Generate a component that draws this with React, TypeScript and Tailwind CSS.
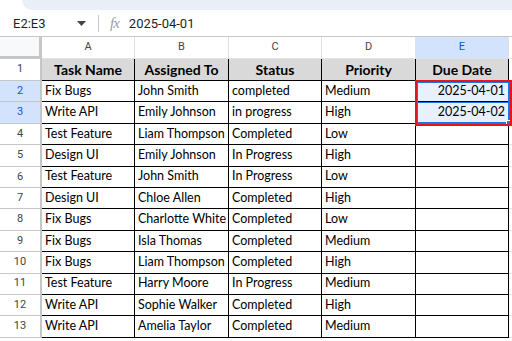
import React from "react";

type Row = [string, string, string, string, string];

const rows: Row[] = [
  ["Fix Bugs", "John Smith", "completed", "Medium", "2025-04-01"],
  ["Write API", "Emily Johnson", "in progress", "High", "2025-04-02"],
  ["Test Feature", "Liam Thompson", "Completed", "Low", ""],
  ["Design UI", "Emily Johnson", "In Progress", "High", ""],
  ["Test Feature", "John Smith", "In Progress", "Low", ""],
  ["Design UI", "Chloe Allen", "Completed", "High", ""],
  ["Fix Bugs", "Charlotte White", "Completed", "Low", ""],
  ["Fix Bugs", "Isla Thomas", "Completed", "Medium", ""],
  ["Fix Bugs", "Liam Thompson", "Completed", "High", ""],
  ["Test Feature", "Harry Moore", "In Progress", "Medium", ""],
  ["Write API", "Sophie Walker", "Completed", "High", ""],
  ["Write API", "Amelia Taylor", "Completed", "Medium", ""],
];

const headers = ["Task Name", "Assigned To", "Status", "Priority", "Due Date"];
const letters = ["A", "B", "C", "D", "E"];

const cellFont = { fontFamily: "Lato, 'Liberation Sans', sans-serif" };
const uiFont = { fontFamily: "Roboto, 'Liberation Sans', sans-serif" };

export default function App() {
  return (
    <div className="w-[512px] h-[341px] overflow-hidden bg-white relative" style={uiFont}>
      {/* toolbar bottom edge */}
      <div className="ml-[22px] h-[10px] bg-[#eaeef6] rounded-bl-[12px]" />

      {/* formula bar */}
      <div className="h-[27px] flex items-center border-b border-[#c7c7c7] text-[13px] text-[#1f1f1f]">
        <div className="w-[98px] flex items-center pl-[13px] pr-[10px] justify-between pt-[1px]">
          <span>E2:E3</span>
          <svg width="9" height="5" viewBox="0 0 9 5" className="mr-[2px]">
            <path d="M0 0h9L4.5 5z" fill="#444" />
          </svg>
        </div>
        <div className="w-px h-[17px] bg-[#c7c7c7]" />
        <span
          className="ml-[11px] italic text-[#9aa0a6] text-[15px] tracking-[-1px]"
          style={{ fontFamily: "'Liberation Serif', serif" }}
        >
          fx
        </span>
        <span className="ml-[10px] pt-[1px]">2025-04-01</span>
      </div>

      {/* grid */}
      <div className="grid grid-cols-[42px_93px_94px_93px_94px_93px_3px]">
        {/* column headers */}
        <div className="h-[22px] bg-[#f8f9fa] border-r-[3px] border-b-[3px] border-[#c4c7c5]" />
        {letters.map((l) => (
          <div
            key={l}
            className={`h-[22px] flex items-center justify-center text-[11px] border-r border-b border-[#e1e1e1] ${
              l === "E" ? "bg-[#d3e3fd] text-[#0b57d0]" : "bg-white text-[#444]"
            }`}
          >
            {l}
          </div>
        ))}
        <div className="h-[22px] border-b border-[#e1e1e1]" />

        {/* header row 1 */}
        <div className="h-[22px] flex items-center justify-center text-[11px] text-[#444] bg-white border-r-[2px] border-b border-[#c4c7c5]">
          1
        </div>
        {headers.map((h) => (
          <div
            key={h}
            className="h-[22px] flex items-center justify-center font-bold text-[14px] text-black bg-[#d9d9d9] border-r border-b border-black"
            style={cellFont}
          >
            {h}
          </div>
        ))}
        <div className="h-[22px] border-b border-[#e1e1e1]" />

        {rows.map((r, i) => {
          const sel = i < 2;
          return (
            <React.Fragment key={i}>
              <div
                className={`h-[21.4px] flex items-center justify-center text-[11px] border-r-[2px] border-b border-[#c4c7c5] ${
                  sel ? "bg-[#d3e3fd] text-[#0b57d0]" : "bg-white text-[#444]"
                }`}
              >
                {i + 2}
              </div>
              {r.map((c, j) => (
                <div
                  key={j}
                  className={`h-[21.4px] flex items-center px-[3px] text-[12.5px] text-black border-r border-b border-black whitespace-nowrap overflow-hidden ${
                    j === 4 ? "justify-end" : ""
                  } ${j === 4 && sel ? "bg-[#e8f0fe]" : ""}`}
                  style={cellFont}
                >
                  {c}
                </div>
              ))}
              <div className="h-[21.4px] border-b border-[#e1e1e1]" />
            </React.Fragment>
          );
        })}
      </div>

      {/* selection and annotation */}
      <div className="absolute left-[416px] top-[81px] w-[94px] h-[43px] border-[2px] border-[#1a73e8] pointer-events-none">
        <div className="mt-[19px] h-px bg-[#1a73e8]" />
        <div className="absolute -right-[4px] -bottom-[4px] w-[6px] h-[6px] bg-[#1a73e8] border border-white" />
      </div>
      <div className="absolute left-[415px] top-[80px] w-[97px] h-[46px] border-[2px] border-[#e3161b] pointer-events-none" />
    </div>
  );
}
